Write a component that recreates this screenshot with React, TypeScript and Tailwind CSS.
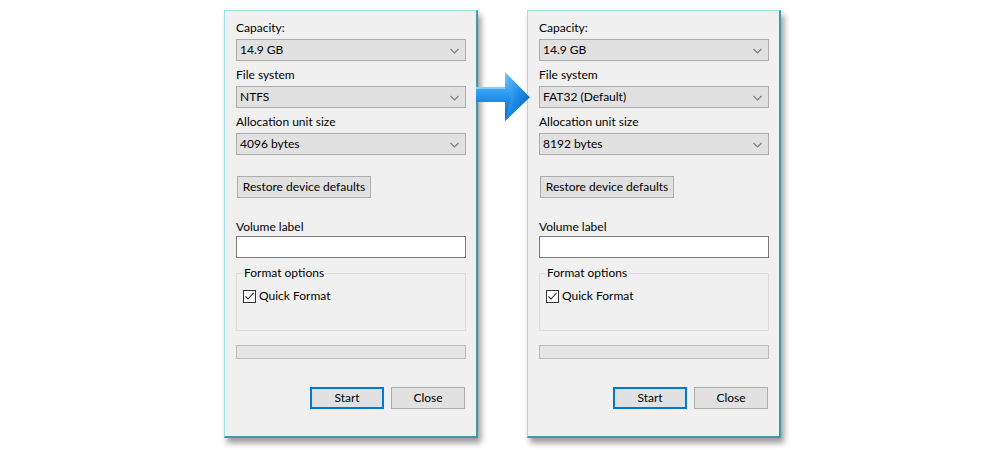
import React from "react";

type DialogProps = {
  fileSystem: string;
  unitSize: string;
};

function Select({ value }: { value: string }) {
  return (
    <div className="flex h-[22px] w-[230px] items-center justify-between border border-[#adadad] bg-[#e1e1e1] pl-[3px] pr-[6px] text-[12px] text-black">
      <span>{value}</span>
      <svg width="9" height="6" viewBox="0 0 9 6" className="mt-[1px]">
        <path d="M0.5 1 L4.5 5 L8.5 1" fill="none" stroke="#7a7a7a" strokeWidth="1.1" />
      </svg>
    </div>
  );
}

function Label({ text }: { text: string }) {
  return <div className="h-[16px] leading-[16px] text-[12px] text-black">{text}</div>;
}

function FormatDialog({ fileSystem, unitSize }: DialogProps) {
  return (
    <div className="flex h-[428px] w-[254px] flex-col border-l border-t border-[#9fdfe8] border-r-2 border-b-2 border-r-[#3f97a8] border-b-[#3f97a8] bg-[#f0f0f0] pl-[11px] pt-[9px] shadow-[3px_5px_6px_rgba(0,0,0,0.4)]">
      <Label text="Capacity:" />
      <div className="mt-[3px]">
        <Select value="14.9 GB" />
      </div>
      <div className="mt-[6px]">
        <Label text="File system" />
      </div>
      <div className="mt-[3px]">
        <Select value={fileSystem} />
      </div>
      <div className="mt-[6px]">
        <Label text="Allocation unit size" />
      </div>
      <div className="mt-[3px]">
        <Select value={unitSize} />
      </div>

      <div className="ml-[1px] mt-[21px] flex h-[22px] w-[134px] items-center justify-center border border-[#adadad] bg-[#e1e1e1] pb-[1px] text-[12px] text-black">
        Restore device defaults
      </div>

      <div className="mt-[21px]">
        <Label text="Volume label" />
      </div>
      <div className="mt-[1px] h-[22px] w-[230px] border border-[#7a7a7a] bg-white" />

      <div className="relative mt-[15px] h-[58px] w-[230px] border border-[#dcdcdc]">
        <div className="absolute left-[6px] top-[-9px] bg-[#f0f0f0] px-[1px] text-[12px] leading-[16px] text-black">
          Format options
        </div>
        <div className="mt-[14px] ml-[6px] flex items-center gap-[3px]">
          <div className="flex h-[13px] w-[13px] items-center justify-center border border-[#333] bg-white">
            <svg width="11" height="11" viewBox="0 0 11 11">
              <path d="M1.5 5.5 L4 8 L9.5 2" fill="none" stroke="#222" strokeWidth="1.1" />
            </svg>
          </div>
          <span className="text-[12px] leading-[16px] text-black">Quick Format</span>
        </div>
      </div>

      <div className="mt-[14px] h-[14px] w-[230px] border border-[#bcbcbc] bg-[#e6e6e6]" />

      <div className="mt-[28px] flex w-[229px] justify-end gap-[7px]">
        <div className="flex h-[22px] w-[74px] items-center justify-center border-2 border-[#0078d7] bg-[#e1e1e1] pb-[1px] text-[12px] text-black">
          Start
        </div>
        <div className="flex h-[22px] w-[74px] items-center justify-center border border-[#adadad] bg-[#e1e1e1] pb-[1px] text-[12px] text-black">
          Close
        </div>
      </div>
    </div>
  );
}

function Arrow() {
  return (
    <svg width="60" height="52" viewBox="0 0 60 52" className="absolute left-[474px] top-[71px]">
      <defs>
        <linearGradient id="shaft" x1="0" y1="0" x2="0" y2="1">
          <stop offset="0" stopColor="#8fd0ff" />
          <stop offset="0.45" stopColor="#2a9af0" />
          <stop offset="1" stopColor="#0a5fc0" />
        </linearGradient>
        <linearGradient id="head" x1="0" y1="0" x2="1" y2="1">
          <stop offset="0" stopColor="#6cc2ff" />
          <stop offset="0.5" stopColor="#1e8ae8" />
          <stop offset="1" stopColor="#0a56b0" />
        </linearGradient>
      </defs>
      <path d="M2 16 L31 16 L31 1 L56 26 L31 50 L31 31 L2 31 Z" fill="url(#shaft)" />
      <path d="M31 1 L56 26 L31 50 L37 26 Z" fill="url(#head)" />
      <path d="M31 1 L56 26" stroke="#b9e3ff" strokeWidth="1" fill="none" />
      <path d="M2 17 L31 17" stroke="#c8ebff" strokeWidth="1" />
    </svg>
  );
}

export default function App() {
  return (
    <main className="relative h-[450px] w-[1000px] bg-white font-['Lato','Liberation_Sans',sans-serif]">
      <div className="flex gap-[49px] pl-[224px] pt-[10px]">
        <FormatDialog fileSystem="NTFS" unitSize="4096 bytes" />
        <FormatDialog fileSystem="FAT32 (Default)" unitSize="8192 bytes" />
      </div>
      <Arrow />
    </main>
  );
}
